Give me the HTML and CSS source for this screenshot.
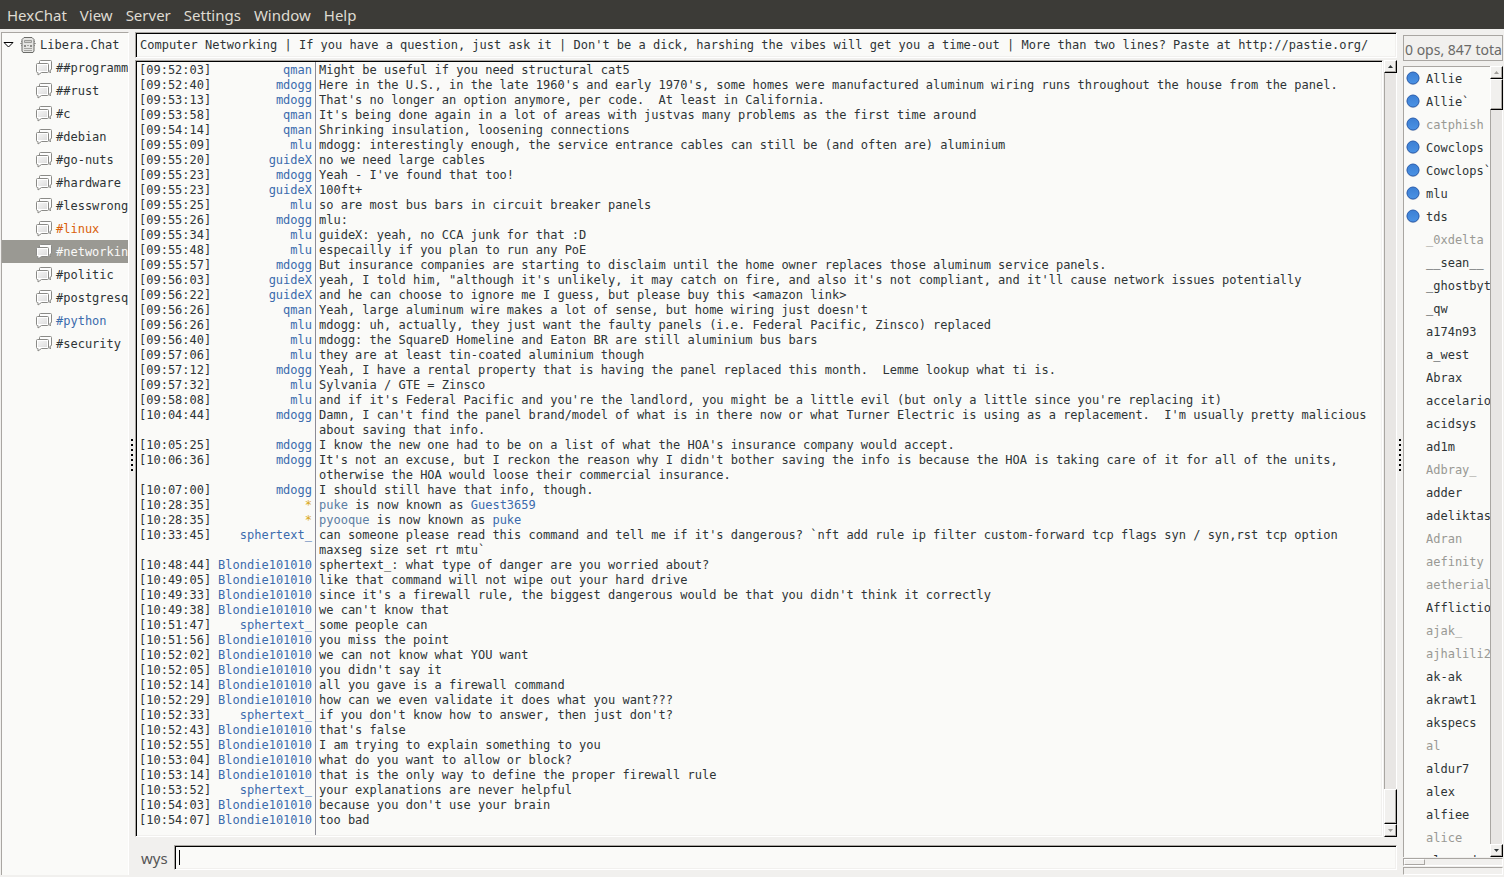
FILE: index.html
```
<!DOCTYPE html>
<html lang="en">
<head>
    <meta charset="UTF-8">
    <meta name="viewport" content="width=device-width, initial-scale=1.0">
    <title>HexChat</title>
    <link rel="stylesheet" href="styles.css">
</head>
<body>
    <svg class="defs" width="0" height="0">
        <defs>
            <linearGradient id="paper" x1="0" y1="0" x2="1" y2="1">
                <stop offset="0" stop-color="#f4f4f4"/>
                <stop offset="1" stop-color="#dedede"/>
            </linearGradient>
            <linearGradient id="ball" x1="0" y1="0" x2="0" y2="1">
                <stop offset="0" stop-color="#3c7fd4"/>
                <stop offset="1" stop-color="#4a92e4"/>
            </linearGradient>
            <symbol id="chat" viewBox="0 0 16 16">
                <path d="M4.500.5h10q1 0 1 1v7.500q0 1-1 1h-.500l.500 3-3-3h-7q-1 0-1-1v-7.500q0-1 1-1z" fill="#fdfdfd" stroke="#8a8a87"/>
                <path d="M1.500 3.500h10q1 0 1 1v7q0 1-1 1h-6l-3.500 2.500v-2.500h-.500q-1 0-1-1v-7q0-1 1-1z" fill="#fff" stroke="#8a8a87"/>
                <path d="M2 5h9v6h-9z" fill="url(#paper)"/>
            </symbol>
            <symbol id="user" viewBox="0 0 14 14">
                <circle cx="7" cy="7.500" r="6.500" fill="#c9cdd4"/>
                <circle cx="7" cy="7" r="6" fill="url(#ball)" stroke="#2a5fb0"/>
            </symbol>
        </defs>
    </svg>

    <nav class="menubar">
        <button>HexChat</button>
        <button>View</button>
        <button>Server</button>
        <button>Settings</button>
        <button>Window</button>
        <button>Help</button>
    </nav>

    <main class="window">
        <aside class="tree">
            <button class="server">
                <svg class="arrow" width="11" height="8" viewBox="0 0 11 8"><path d="M1 1.500h9l-4.500 4.500z" fill="#fff" stroke="#000"/></svg>
                <svg width="16" height="16" viewBox="0 0 16 16">
                    <path d="M1 4.500h14M0 6.500h16M1 8.500h14" stroke="#a5a5a2"/>
                    <path d="M4 .5h8l2 2v11.500l-1 1.500h-10l-1-1.500v-11.500z" fill="#e4e4e2" stroke="#6a6b68"/>
                    <path d="M4.500 3.500h7v2h-7z" fill="#cfcfcc" stroke="#9b9b98"/>
                    <path d="M4 8h2v2h-2zM10 8h2v2h-2z" fill="#8b8b88"/>
                    <path d="M7 8.500h2M4 11.500h8M4 13.500h8" stroke="#a5a5a2"/>
                </svg>
                <span>Libera.Chat</span>
            </button>
            <button><svg><use href="#chat"/></svg><span>##programming</span></button>
            <button><svg><use href="#chat"/></svg><span>##rust</span></button>
            <button><svg><use href="#chat"/></svg><span>#c</span></button>
            <button><svg><use href="#chat"/></svg><span>#debian</span></button>
            <button><svg><use href="#chat"/></svg><span>#go-nuts</span></button>
            <button><svg><use href="#chat"/></svg><span>#hardware</span></button>
            <button><svg><use href="#chat"/></svg><span>#lesswrong</span></button>
            <button class="highlight"><svg><use href="#chat"/></svg><span>#linux</span></button>
            <button class="selected"><svg><use href="#chat"/></svg><span>#networking</span></button>
            <button><svg><use href="#chat"/></svg><span>#politic</span></button>
            <button><svg><use href="#chat"/></svg><span>#postgresql</span></button>
            <button class="unread"><svg><use href="#chat"/></svg><span>#python</span></button>
            <button><svg><use href="#chat"/></svg><span>#security</span></button>
        </aside>

        <div class="handle"><i></i></div>

        <section class="channel">
            <input class="entry topic" type="text" aria-label="Topic" value="Computer Networking | If you have a question, just ask it | Don't be a dick, harshing the vibes will get you a time-out | More than two lines? Paste at http://pastie.org/">
            <div class="chat">
                <div class="log">
                    <table>
                        <colgroup><col class="col-time"><col class="col-nick"><col></colgroup>
                        <tbody>
                            <tr><td>[09:52:03]</td><td class="nick">qman</td><td>Might be useful if you need structural cat5</td></tr>
                            <tr><td>[09:52:40]</td><td class="nick">mdogg</td><td>Here in the U.S., in the late 1960's and early 1970's, some homes were manufactured aluminum wiring runs throughout the house from the panel.</td></tr>
                            <tr><td>[09:53:13]</td><td class="nick">mdogg</td><td>That's no longer an option anymore, per code.  At least in California.</td></tr>
                            <tr><td>[09:53:58]</td><td class="nick">qman</td><td>It's being done again in a lot of areas with justvas many problems as the first time around</td></tr>
                            <tr><td>[09:54:14]</td><td class="nick">qman</td><td>Shrinking insulation, loosening connections</td></tr>
                            <tr><td>[09:55:09]</td><td class="nick">mlu</td><td>mdogg: interestingly enough, the service entrance cables can still be (and often are) aluminium</td></tr>
                            <tr><td>[09:55:20]</td><td class="nick">guideX</td><td>no we need large cables</td></tr>
                            <tr><td>[09:55:23]</td><td class="nick">mdogg</td><td>Yeah - I've found that too!</td></tr>
                            <tr><td>[09:55:23]</td><td class="nick">guideX</td><td>100ft+</td></tr>
                            <tr><td>[09:55:25]</td><td class="nick">mlu</td><td>so are most bus bars in circuit breaker panels</td></tr>
                            <tr><td>[09:55:26]</td><td class="nick">mdogg</td><td>mlu:</td></tr>
                            <tr><td>[09:55:34]</td><td class="nick">mlu</td><td>guideX: yeah, no CCA junk for that :D</td></tr>
                            <tr><td>[09:55:48]</td><td class="nick">mlu</td><td>especailly if you plan to run any PoE</td></tr>
                            <tr><td>[09:55:57]</td><td class="nick">mdogg</td><td>But insurance companies are starting to disclaim until the home owner replaces those aluminum service panels.</td></tr>
                            <tr><td>[09:56:03]</td><td class="nick">guideX</td><td>yeah, I told him, "although it's unlikely, it may catch on fire, and also it's not compliant, and it'll cause network issues potentially</td></tr>
                            <tr><td>[09:56:22]</td><td class="nick">guideX</td><td>and he can choose to ignore me I guess, but please buy this &lt;amazon link&gt;</td></tr>
                            <tr><td>[09:56:26]</td><td class="nick">qman</td><td>Yeah, large aluminum wire makes a lot of sense, but home wiring just doesn't</td></tr>
                            <tr><td>[09:56:26]</td><td class="nick">mlu</td><td>mdogg: uh, actually, they just want the faulty panels (i.e. Federal Pacific, Zinsco) replaced</td></tr>
                            <tr><td>[09:56:40]</td><td class="nick">mlu</td><td>mdogg: the SquareD Homeline and Eaton BR are still aluminium bus bars</td></tr>
                            <tr><td>[09:57:06]</td><td class="nick">mlu</td><td>they are at least tin-coated aluminium though</td></tr>
                            <tr><td>[09:57:12]</td><td class="nick">mdogg</td><td>Yeah, I have a rental property that is having the panel replaced this month.  Lemme lookup what ti is.</td></tr>
                            <tr><td>[09:57:32]</td><td class="nick">mlu</td><td>Sylvania / GTE = Zinsco</td></tr>
                            <tr><td>[09:58:08]</td><td class="nick">mlu</td><td>and if it's Federal Pacific and you're the landlord, you might be a little evil (but only a little since you're replacing it)</td></tr>
                            <tr><td>[10:04:44]</td><td class="nick">mdogg</td><td>Damn, I can't find the panel brand/model of what is in there now or what Turner Electric is using as a replacement.  I'm usually pretty malicious about saving that info.</td></tr>
                            <tr><td>[10:05:25]</td><td class="nick">mdogg</td><td>I know the new one had to be on a list of what the HOA's insurance company would accept.</td></tr>
                            <tr><td>[10:06:36]</td><td class="nick">mdogg</td><td>It's not an excuse, but I reckon the reason why I didn't bother saving the info is because the HOA is taking care of it for all of the units, otherwise the HOA would loose their commercial insurance.</td></tr>
                            <tr><td>[10:07:00]</td><td class="nick">mdogg</td><td>I should still have that info, though.</td></tr>
                            <tr><td>[10:28:35]</td><td class="nick star">*</td><td><span class="old-nick">puke</span> is now known as <span class="new-nick">Guest3659</span></td></tr>
                            <tr><td>[10:28:35]</td><td class="nick star">*</td><td><span class="old-nick">pyooque</span> is now known as <span class="new-nick">puke</span></td></tr>
                            <tr><td>[10:33:45]</td><td class="nick">sphertext_</td><td>can someone please read this command and tell me if it's dangerous? `nft add rule ip filter custom-forward tcp flags syn / syn,rst tcp option maxseg size set rt mtu`</td></tr>
                            <tr><td>[10:48:44]</td><td class="nick">Blondie101010</td><td>sphertext_: what type of danger are you worried about?</td></tr>
                            <tr><td>[10:49:05]</td><td class="nick">Blondie101010</td><td>like that command will not wipe out your hard drive</td></tr>
                            <tr><td>[10:49:33]</td><td class="nick">Blondie101010</td><td>since it's a firewall rule, the biggest dangerous would be that you didn't think it correctly</td></tr>
                            <tr><td>[10:49:38]</td><td class="nick">Blondie101010</td><td>we can't know that</td></tr>
                            <tr><td>[10:51:47]</td><td class="nick">sphertext_</td><td>some people can</td></tr>
                            <tr><td>[10:51:56]</td><td class="nick">Blondie101010</td><td>you miss the point</td></tr>
                            <tr><td>[10:52:02]</td><td class="nick">Blondie101010</td><td>we can not know what YOU want</td></tr>
                            <tr><td>[10:52:05]</td><td class="nick">Blondie101010</td><td>you didn't say it</td></tr>
                            <tr><td>[10:52:14]</td><td class="nick">Blondie101010</td><td>all you gave is a firewall command</td></tr>
                            <tr><td>[10:52:29]</td><td class="nick">Blondie101010</td><td>how can we even validate it does what you want???</td></tr>
                            <tr><td>[10:52:33]</td><td class="nick">sphertext_</td><td>if you don't know how to answer, then just don't?</td></tr>
                            <tr><td>[10:52:43]</td><td class="nick">Blondie101010</td><td>that's false</td></tr>
                            <tr><td>[10:52:55]</td><td class="nick">Blondie101010</td><td>I am trying to explain something to you</td></tr>
                            <tr><td>[10:53:04]</td><td class="nick">Blondie101010</td><td>what do you want to allow or block?</td></tr>
                            <tr><td>[10:53:14]</td><td class="nick">Blondie101010</td><td>that is the only way to define the proper firewall rule</td></tr>
                            <tr><td>[10:53:52]</td><td class="nick">sphertext_</td><td>your explanations are never helpful</td></tr>
                            <tr><td>[10:54:03]</td><td class="nick">Blondie101010</td><td>because you don't use your brain</td></tr>
                            <tr><td>[10:54:07]</td><td class="nick">Blondie101010</td><td>too bad</td></tr>
                        </tbody>
                    </table>
                </div>
                <div class="scrollbar">
                    <button aria-label="Scroll up"><svg width="5" height="3" viewBox="0 0 5 3"><path d="M0 3h5L2.500 0z"/></svg></button>
                    <div class="trough bottom"><div class="thumb"></div></div>
                    <button aria-label="Scroll down" disabled><svg width="5" height="3" viewBox="0 0 5 3"><path d="M0 0h5L2.500 3z"/></svg></button>
                </div>
            </div>
            <div class="input-row">
                <label for="message">wys</label>
                <input class="entry" id="message" type="text" autofocus>
            </div>
        </section>

        <div class="handle"><i></i></div>

        <aside class="users">
            <div class="count">0 ops, 847 total</div>
            <div class="userlist">
                <ul>
                    <li><svg><use href="#user"/></svg><span>Allie</span></li>
                    <li><svg><use href="#user"/></svg><span>Allie`</span></li>
                    <li class="away"><svg><use href="#user"/></svg><span>catphish</span></li>
                    <li><svg><use href="#user"/></svg><span>Cowclops</span></li>
                    <li><svg><use href="#user"/></svg><span>Cowclops`</span></li>
                    <li><svg><use href="#user"/></svg><span>mlu</span></li>
                    <li><svg><use href="#user"/></svg><span>tds</span></li>
                    <li class="away"><svg></svg><span>_0xdelta</span></li>
                    <li><svg></svg><span>__sean__</span></li>
                    <li><svg></svg><span>_ghostbyt</span></li>
                    <li><svg></svg><span>_qw</span></li>
                    <li><svg></svg><span>a174n93</span></li>
                    <li><svg></svg><span>a_west</span></li>
                    <li><svg></svg><span>Abrax</span></li>
                    <li><svg></svg><span>accelario</span></li>
                    <li><svg></svg><span>acidsys</span></li>
                    <li><svg></svg><span>ad1m</span></li>
                    <li class="away"><svg></svg><span>Adbray_</span></li>
                    <li><svg></svg><span>adder</span></li>
                    <li><svg></svg><span>adeliktas</span></li>
                    <li class="away"><svg></svg><span>Adran</span></li>
                    <li class="away"><svg></svg><span>aefinity</span></li>
                    <li class="away"><svg></svg><span>aetherial</span></li>
                    <li><svg></svg><span>Afflictio</span></li>
                    <li class="away"><svg></svg><span>ajak_</span></li>
                    <li class="away"><svg></svg><span>ajhalili2</span></li>
                    <li><svg></svg><span>ak-ak</span></li>
                    <li><svg></svg><span>akrawt1</span></li>
                    <li><svg></svg><span>akspecs</span></li>
                    <li class="away"><svg></svg><span>al</span></li>
                    <li><svg></svg><span>aldur7</span></li>
                    <li><svg></svg><span>alex</span></li>
                    <li><svg></svg><span>alfiee</span></li>
                    <li class="away"><svg></svg><span>alice</span></li>
                    <li><svg></svg><span>alexand</span></li>
                </ul>
                <div class="scrollbar">
                    <button aria-label="Scroll up" disabled><svg width="5" height="3" viewBox="0 0 5 3"><path d="M0 3h5L2.500 0z"/></svg></button>
                    <div class="trough"><div class="thumb"></div></div>
                    <button aria-label="Scroll down"><svg width="5" height="3" viewBox="0 0 5 3"><path d="M0 0h5L2.500 3z"/></svg></button>
                </div>
            </div>
            <div class="meter"><div class="fill"></div></div>
            <div class="meter"></div>
        </aside>
    </main>
</body>
</html>
```

FILE: styles.css
```
* {
    box-sizing: border-box;
}

body {
    display: flex;
    flex-direction: column;
    height: 100vh;
    margin: 0;
    overflow: hidden;
    background: #f1f0ee;
    color: #2e3436;
    font: 12px/15px "DejaVu Sans Mono", monospace;
}

button {
    border: none;
    padding: 0;
    background: none;
    color: inherit;
    font: inherit;
}

.defs {
    position: absolute;
}

/* menu */
.menubar {
    display: flex;
    gap: 13px;
    height: 29px;
    padding: 2px 7px 0;
    background: #3c3b37;
    color: #dfdbd2;
    font: 15px/27px "Noto Sans", sans-serif;
}

.window {
    display: flex;
    flex: 1;
    min-height: 0;
    padding: 3px 1px 0;
}

/* channel tree */
.tree {
    flex: none;
    width: 128px;
    margin-bottom: 2px;
    overflow: hidden;
    border-top: 1px solid #a9a6a2;
    border-left: 1px solid #a9a6a2;
    border-right: 1px solid #fff;
    background: #fafaf8;
}

.tree button {
    display: flex;
    align-items: center;
    gap: 4px;
    width: 100%;
    height: 23px;
    padding-left: 34px;
    overflow: hidden;
    white-space: nowrap;
}

.tree span,
.userlist span {
    padding-top: 2px;
}

.tree svg {
    flex: none;
    width: 16px;
    height: 16px;
}

.tree .server {
    padding-left: 1px;
}

.tree .server .arrow {
    width: 11px;
    height: 8px;
    margin-right: 2px;
}

.tree .highlight {
    color: #d9600a;
}

.tree .unread {
    color: #3b6bad;
}

.tree .selected {
    background: #9a9993;
    color: #fafaf8;
}

/* pane dividers */
.handle {
    display: flex;
    flex: none;
    align-items: center;
    justify-content: center;
    width: 6px;
}

.handle i {
    width: 2px;
    height: 32px;
    background: repeating-linear-gradient(#000 0 2px, transparent 2px 5px);
}

/* text boxes */
.entry {
    display: block;
    width: 100%;
    height: 26px;
    margin: 0;
    padding: 0 4px 1px;
    border: 1px solid;
    border-color: #a9a6a2 #fff #fff #a9a6a2;
    border-radius: 0;
    outline: none;
    background: #fafaf8;
    box-shadow: inset 1px 1px #000, inset -1px -1px #f1f0ee;
    color: inherit;
    font: inherit;
}

/* chat */
.channel {
    display: flex;
    flex: 1;
    flex-direction: column;
    min-width: 0;
    padding-bottom: 7px;
}

.chat {
    display: flex;
    flex: 1;
    gap: 1px;
    min-height: 0;
    margin: 2px 0 8px;
}

.log {
    flex: 1;
    min-width: 0;
    overflow: hidden;
    padding: 2px 2px 1px 3px;
    border: 1px solid;
    border-color: #a9a6a2 #fff #fff #a9a6a2;
    background: linear-gradient(#8b8b96, #8b8b96) 179px 0 / 1px 100% no-repeat #fafaf8;
    box-shadow: inset 1px 1px #000, inset -1px -1px #f1f0ee;
}

.log table {
    width: 100%;
    table-layout: fixed;
    border-collapse: collapse;
}

.log td {
    padding: 0 0 0 4px;
    vertical-align: top;
    white-space: pre-wrap;
}

.log td:first-child {
    padding: 0;
}

.log .nick {
    padding: 0 3px 0 0;
    color: #3b6bad;
    text-align: right;
}

.col-time {
    width: 76px;
}

.col-nick {
    width: 100px;
}

.log .star {
    color: #d9a81a;
}

.old-nick {
    color: #5b7da3;
}

.new-nick {
    color: #3b6bad;
}

.input-row {
    display: flex;
    align-items: center;
    gap: 6px;
    padding-left: 6px;
}

.input-row label {
    padding-top: 1px;
    color: #555;
    font: 15px/24px "Noto Sans", sans-serif;
}

/* fixed cursor bar instead of the blinking one */
.input-row .entry {
    flex: 1;
    height: 25px;
    background: linear-gradient(#000, #000) 4px 4px / 1px 15px no-repeat #fafaf8;
    caret-color: transparent;
}

/* scrollbars */
.scrollbar {
    display: flex;
    flex: none;
    flex-direction: column;
    width: 13px;
}

.scrollbar button,
.thumb {
    border: 1px solid;
    border-color: #fff #000 #000 #fff;
    background: #f1f0ee;
    box-shadow: inset -1px -1px #a9a6a2;
}

.scrollbar button {
    display: flex;
    align-items: center;
    justify-content: center;
    height: 13px;
    fill: #2e3436;
}

.scrollbar button:disabled {
    fill: #a09e9a;
}

.trough {
    display: flex;
    flex: 1;
    flex-direction: column;
    border-left: 1px solid #a9a6a2;
    border-right: 1px solid #fff;
    background: #e8e6e4;
}

.trough.bottom {
    justify-content: flex-end;
}

.thumb {
    height: 31px;
    margin: 0 -1px;
}

.trough.bottom .thumb {
    height: 35px;
}

/* user list */
.users {
    display: flex;
    flex: none;
    flex-direction: column;
    width: 100px;
    padding: 3px 0 2px;
}

.count {
    overflow: hidden;
    height: 26px;
    margin-bottom: 5px;
    padding-left: 1px;
    border: 1px solid #a9a6a2;
    color: #6a6a68;
    font: 14px/27px "Noto Sans", sans-serif;
    white-space: nowrap;
}

.userlist {
    display: flex;
    flex: 1;
    min-height: 0;
}

.userlist ul {
    flex: 1;
    min-width: 0;
    margin: 0;
    padding: 0;
    overflow: hidden;
    border-top: 1px solid #a9a6a2;
    border-left: 1px solid #a9a6a2;
    background: #fafaf8;
    list-style: none;
}

.userlist li {
    display: flex;
    align-items: center;
    gap: 6px;
    height: 23px;
    padding-left: 2px;
    white-space: nowrap;
}

.userlist li svg {
    flex: none;
    width: 14px;
    height: 14px;
    margin-bottom: 1px;
}

.userlist .away {
    color: #999994;
}

.meter {
    height: 8px;
    margin-top: 1px;
    border: 1px solid;
    border-color: #a9a6a2 #fff #fff #a9a6a2;
}

.fill {
    width: 21px;
    height: 6px;
    border: 1px solid;
    border-color: #fff #a9a6a2 #a9a6a2 #fff;
}
```
